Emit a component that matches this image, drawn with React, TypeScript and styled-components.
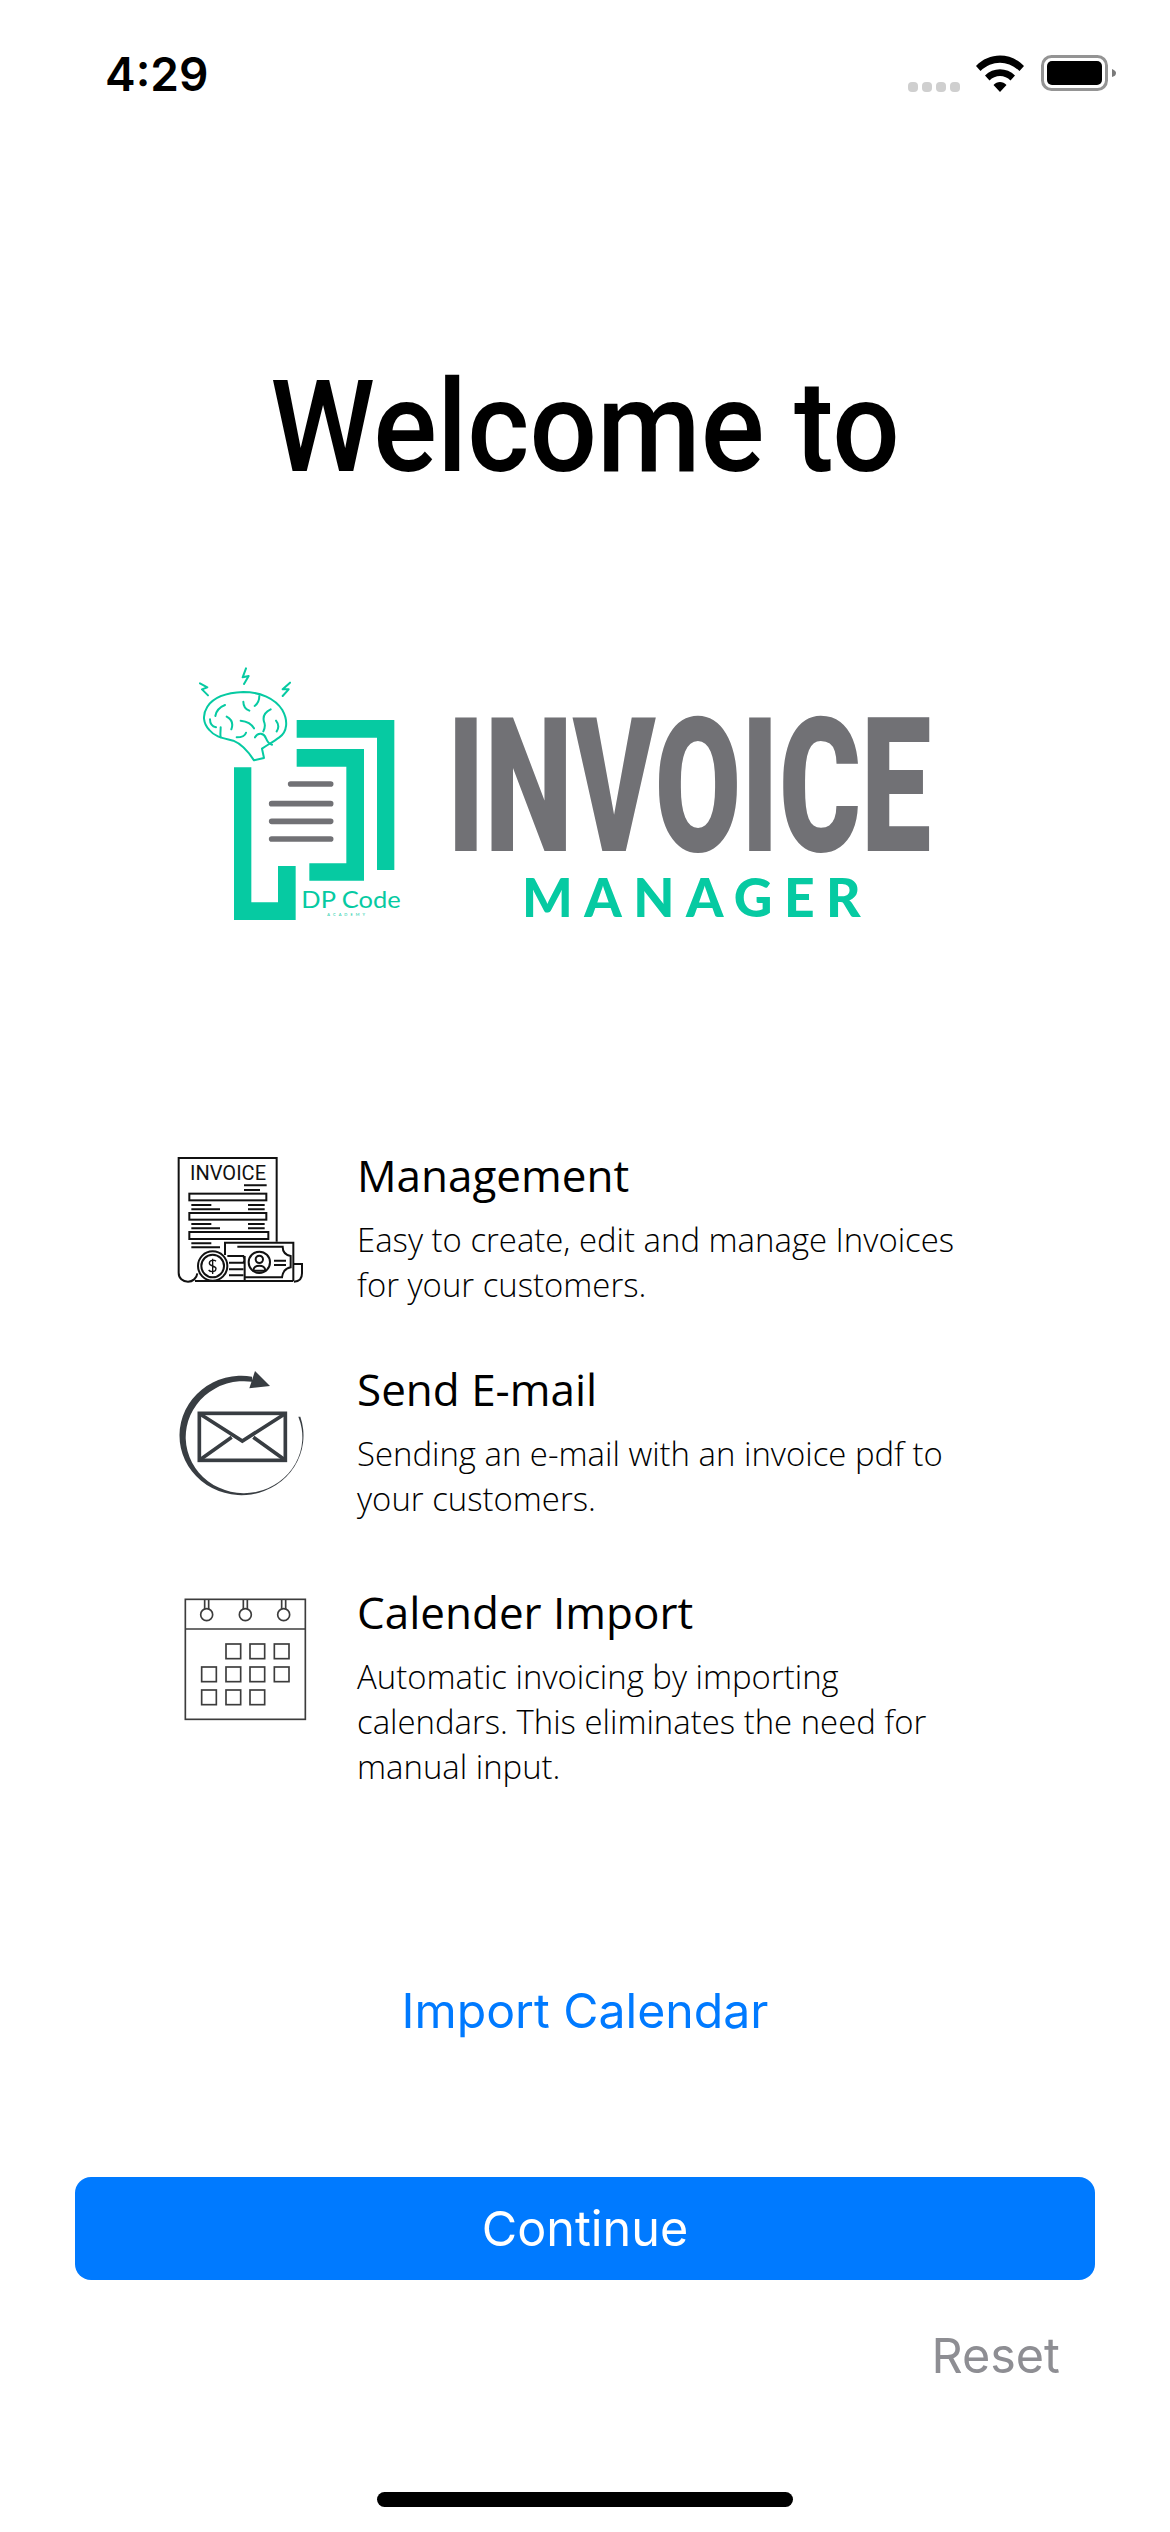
import styled, { createGlobalStyle } from "styled-components";

const GlobalStyle = createGlobalStyle`
  html, body {
    margin: 0;
    padding: 0;
    background: #ffffff;
  }
`;

const Screen = styled.div`
  width: 1170px;
  height: 2532px;
  display: flex;
  flex-direction: column;
  overflow: hidden;
  background: #ffffff;
  font-family: "Open Sans", sans-serif;
`;

const StatusBar = styled.div`
  height: 148px;
  display: flex;
  justify-content: space-between;
  align-items: flex-start;
  padding: 50px 51px 0 105px;
  box-sizing: border-box;
`;

const Time = styled.span`
  font-family: Inter, sans-serif;
  font-weight: 600;
  font-size: 46px;
  line-height: 48px;
  color: #000000;
`;

const StatusIcons = styled.div`
  display: flex;
  align-items: flex-start;
  padding-top: 5px;
`;

const Heading = styled.h1`
  margin: 215px 0 0;
  text-align: center;
  font-family: Roboto, sans-serif;
  font-weight: 500;
  font-size: 128px;
  line-height: 128px;
  color: #000000;
  transform: scaleX(0.93);
`;

const LogoSvg = styled.svg`
  display: block;
  width: 780px;
  height: 290px;
  margin: 159px 0 0 180px;
`;

const Features = styled.div`
  margin: 190px 0 0 160px;
  display: flex;
  flex-direction: column;
`;

const Row = styled.div<{ $top: number }>`
  display: flex;
  height: 220px;
  & > div {
    padding-top: ${(p) => p.$top}px;
  }
`;

const IconSvg = styled.svg`
  flex: none;
  display: block;
  width: 197px;
  height: 180px;
`;

const FeatureText = styled.div`
  width: 620px;
`;

const FeatureTitle = styled.div`
  font-size: 44px;
  line-height: 58px;
  color: #000000;
`;

const FeatureBody = styled.div`
  margin-top: 13px;
  font-weight: 300;
  font-size: 32.9px;
  line-height: 45px;
  color: #000000;
`;

const ImportLink = styled.a`
  margin-top: 191px;
  text-align: center;
  font-family: Inter, sans-serif;
  font-size: 48.2px;
  line-height: 60px;
  color: #007aff;
`;

const ContinueButton = styled.button`
  margin: 136px 75px 0;
  height: 103px;
  border: none;
  border-radius: 16px;
  background: #007aff;
  color: #ffffff;
  font-family: Inter, sans-serif;
  font-size: 48.5px;
`;

const ResetLink = styled.a`
  margin: 46px 110px 0 0;
  align-self: flex-end;
  font-family: Inter, sans-serif;
  font-size: 48.5px;
  line-height: 60px;
  color: #8e8e93;
`;

const HomeIndicator = styled.div`
  margin: 106px auto 0;
  width: 416px;
  height: 15px;
  border-radius: 8px;
  background: #000000;
`;

const TEAL = "#06caa2";
const GREY = "#717175";

function SignalDots() {
  return (
    <svg width="54" height="40" viewBox="0 0 54 40">
      {[0, 14, 28, 42].map((x) => (
        <rect key={x} x={x + 1} y={27} width={10} height={10} rx={4} fill="#cfcfcf" />
      ))}
    </svg>
  );
}

function Wifi() {
  return (
    <svg width="50" height="40" viewBox="0 0 50 40" style={{ marginLeft: 14 }}>
      <path
        d="M1 11 C14 -3 36 -3 49 11 L44.500 16 C33 5 17 5 5.500 16 Z M10 20.500 C18 12 32 12 40 20.500 L35.500 25.500 C30 19.500 20 19.500 14.500 25.500 Z M18.500 30 C22 26 28 26 31.500 30 L25 37 Z"
        fill="#000000"
      />
    </svg>
  );
}

function Battery() {
  return (
    <svg width="78" height="40" viewBox="0 0 78 40" style={{ marginLeft: 16 }}>
      <rect x="1.500" y="1.500" width="64" height="33" rx="9" fill="none" stroke="#949494" strokeWidth="3" />
      <rect x="6" y="6" width="55" height="24" rx="5" fill="#000000" />
      <path d="M71 14 C74 15 75 17 75 18 C75 20 74 21 71 22 Z" fill="#7a7a7a" />
    </svg>
  );
}

function Logo() {
  return (
    <LogoSvg viewBox="0 0 2340 870">
      <path
        d="M350 210 H643 V660 H591 V263 H350 Z M350 297 H552 V692 H388 V640 H499 V350 H350 Z M162 352 H214 V757 H294 V648 H347 V810 H162 Z"
        fill={TEAL}
      />
      <g stroke={GREY} strokeWidth="17" strokeLinecap="round">
        <path d="M332 402 H452 M275 461 H452 M275 514 H452 M275 567 H452" />
      </g>
      <g fill="none" stroke={TEAL} strokeWidth="6" strokeLinecap="round" strokeLinejoin="round">
        <path d="M222 331 C205 305 185 282 160 272 C135 265 105 262 88 240 C70 222 66 195 82 170 C100 142 140 128 190 126 C240 126 285 145 307 180 C325 212 322 245 298 262 C280 275 262 285 246 296 L252 324 Z" />
        <path d="M135 165 C118 172 108 185 106 198 M90 208 C90 222 98 230 108 232 M140 200 C155 208 160 222 154 238 M122 232 C122 245 120 252 122 262 M182 212 C200 214 215 222 222 235 M170 262 C185 262 195 258 198 248 M225 262 C235 245 252 250 258 265 C262 275 268 282 276 284 M190 155 C190 168 198 178 208 182 M238 138 C238 150 232 162 224 168 M272 178 C255 186 248 200 252 215 C258 228 252 240 250 244 M288 212 C296 222 296 235 290 244" />
        <path d="M60 100 L82 112 L66 118 L84 136 M198 55 L188 82 L206 78 L192 102 M330 98 L308 118 L326 118 L308 138" strokeWidth="6" />
      </g>
      <text x="364" y="773" fontFamily="Lato, sans-serif" fontSize="72" fill={TEAL} textLength="298" lengthAdjust="spacingAndGlyphs">
        DP Code
      </text>
      <text x="442" y="798" fontFamily="Lato, sans-serif" fontSize="12" fill={TEAL} letterSpacing="9">
        ACADEMY
      </text>
      <text transform="translate(801 602) scale(0.667 1)" fontFamily="Roboto, sans-serif" fontWeight="900" fontSize="563" fill={GREY}>
        INVOICE
      </text>
      <text x="1026" y="801" fontFamily="Lato, sans-serif" fontWeight="900" fontSize="160" fill={TEAL} textLength="1016" lengthAdjust="spacing">
        MANAGER
      </text>
    </LogoSvg>
  );
}

function InvoiceIcon() {
  return (
    <IconSvg viewBox="0 0 591 540">
      <g fill="none" stroke="#111111" strokeWidth="6">
        <path d="M350 335 V84 H56 V428 C56 445 68 455 84 455 C98 455 110 445 112 430" />
        <path d="M105 453 H400 M195 375 V338 H400 V453" />
        <path d="M402 402 H426 V430 C426 445 418 455 402 455" />
        <rect x="88" y="191" width="231" height="20" />
        <rect x="88" y="249" width="231" height="20" />
        <rect x="88" y="306" width="237" height="21" />
        <path d="M252 166 H320 M252 180 H300 M94 225 H154 M94 238 H180 M264 225 H314 M264 238 H314 M94 282 H154 M94 295 H180 M264 282 H314 M264 295 H314 M94 340 H154 M94 352 H180" />
        <circle cx="158" cy="408" r="44" />
        <circle cx="158" cy="408" r="34" />
        <path d="M202 378 H250 C255 388 255 392 250 398 H207 M207 398 H250 M207 418 H250 M207 436 H250 M204 453 H254 V378" />
        <path d="M232 350 H368 C368 365 378 375 392 378 V412 C378 415 368 425 366 442 H254" />
        <circle cx="298" cy="397" r="32" />
        <circle cx="298" cy="388" r="11" />
        <path d="M280 422 C280 402 316 402 316 422 Z" />
        <path d="M342 392 H378 M342 405 H378" />
        <path d="M168 394 C162 388 148 390 148 400 C148 410 168 406 168 416 C168 426 152 428 146 420 M158 386 V432" strokeWidth="4" />
      </g>
      <text x="90" y="149" fontFamily="Roboto, sans-serif" fontSize="60" fill="#111111" textLength="228" lengthAdjust="spacing">
        INVOICE
      </text>
    </IconSvg>
  );
}

function MailIcon() {
  return (
    <IconSvg viewBox="0 0 591 540">
      <path
        d="M276 80 A186 179 0 1 0 421 200 L415 200 A175 168 0 1 1 276 95 Z"
        fill="#383d42"
      />
      <path d="M285 63 L330 108 L268 115 Z" fill="#383d42" />
      <g fill="none" stroke="#383d42" strokeWidth="11">
        <rect x="118" y="190" width="258" height="141" />
        <path d="M120 192 L247 273 L374 192 M120 329 L215 262 M374 329 L280 262" />
      </g>
    </IconSvg>
  );
}

function CalendarIcon() {
  const cells = [
    [198, 222],
    [270, 222],
    [343, 222],
    [125, 291],
    [198, 291],
    [270, 291],
    [343, 291],
    [125, 360],
    [198, 360],
    [270, 360],
  ];
  return (
    <IconSvg viewBox="0 0 591 510" style={{ height: 170 }}>
      <g fill="none" stroke="#3c3c3c" strokeWidth="5">
        <rect x="76" y="88" width="360" height="360" />
        <path d="M76 177 H436" />
        {[140, 256, 371].map((x) => (
          <g key={x}>
            <circle cx={x} cy={134} r={18} fill="#ffffff" />
            <path d={`M${x - 6} 88 V117 M${x + 6} 88 V117`} />
          </g>
        ))}
        {cells.map(([x, y]) => (
          <rect key={`${x}-${y}`} x={x} y={y} width={44} height={44} />
        ))}
      </g>
    </IconSvg>
  );
}

function App() {
  return (
    <Screen>
      <GlobalStyle />
      <StatusBar>
        <Time>4:29</Time>
        <StatusIcons>
          <SignalDots />
          <Wifi />
          <Battery />
        </StatusIcons>
      </StatusBar>
      <Heading>Welcome to</Heading>
      <Logo />
      <Features>
        <Row $top={16}>
          <InvoiceIcon />
          <FeatureText>
            <FeatureTitle>Management</FeatureTitle>
            <FeatureBody>
              Easy to create, edit and manage Invoices
              <br />
              for your customers.
            </FeatureBody>
          </FeatureText>
        </Row>
        <Row $top={10}>
          <MailIcon />
          <FeatureText>
            <FeatureTitle>Send E-mail</FeatureTitle>
            <FeatureBody>
              Sending an e-mail with an invoice pdf to
              <br />
              your customers.
            </FeatureBody>
          </FeatureText>
        </Row>
        <Row $top={13}>
          <CalendarIcon />
          <FeatureText>
            <FeatureTitle>Calender Import</FeatureTitle>
            <FeatureBody>
              Automatic invoicing by importing
              <br />
              calendars. This eliminates the need for
              <br />
              manual input.
            </FeatureBody>
          </FeatureText>
        </Row>
      </Features>
      <ImportLink>Import Calendar</ImportLink>
      <ContinueButton>Continue</ContinueButton>
      <ResetLink>Reset</ResetLink>
      <HomeIndicator />
    </Screen>
  );
}

export default App;
